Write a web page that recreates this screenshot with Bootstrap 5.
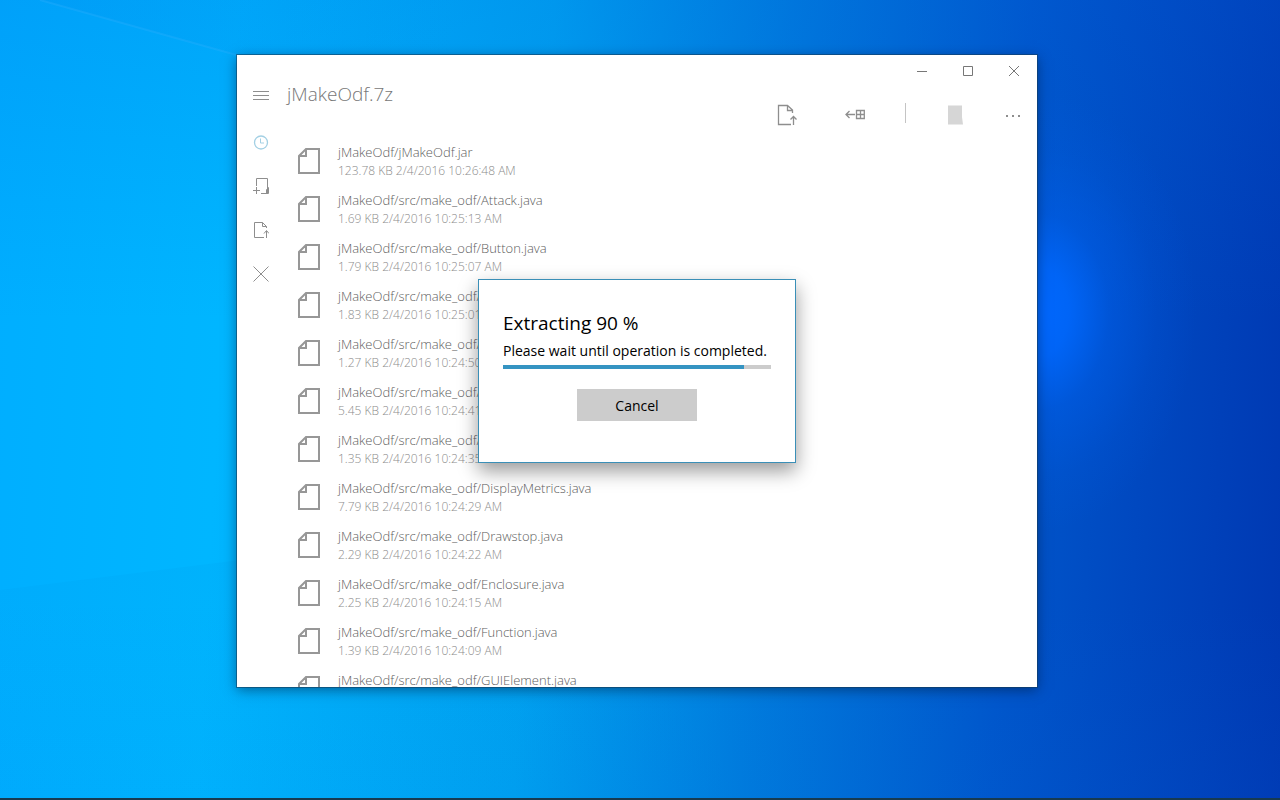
<!DOCTYPE html>
<html lang="en">
<head>
<meta charset="utf-8">
<meta name="viewport" content="width=device-width, initial-scale=1">
<title>jMakeOdf.7z</title>
<link href="https://cdn.jsdelivr.net/npm/bootstrap@5.3.0/dist/css/bootstrap.min.css" rel="stylesheet">
<style>
  body { font-family: "Open Sans", "Noto Sans", sans-serif; color: #000; }
  .desktop {
    background:
      radial-gradient(ellipse 160px 220px at 81% 39%, #0068ff 0%, rgba(0,104,255,.85) 20%, rgba(0,98,245,.4) 45%, rgba(0,96,240,.12) 75%, rgba(0,96,240,0) 100%),
      linear-gradient(180deg, rgba(0,100,225,.18) 0%, rgba(0,100,225,0) 40%, rgba(0,100,225,0) 75%, rgba(0,110,225,.08) 100%),
      linear-gradient(93deg, #00aeff 0%, #00b6ff 18%, #00a2f0 42%, #007adc 60%, #0056cb 78%, #0048c0 88%, #0038b2 100%);
  }
  .taskbar-edge { height: 2px; background: #173a50; z-index: 3; }
  .app-window {
    top: 55px; left: 237px; right: 243px; bottom: 113px;
    min-width: 480px; background: #fff;
    outline: 1px solid rgba(20,60,90,.55);
    box-shadow: 0 3px 12px rgba(0,20,50,.5);
  }
  .flat-btn { border: 0; background: none; padding: 0; color: #8e8e8e; display: flex; align-items: center; justify-content: center; }
  .flat-btn svg { display: block; }
  .caption-bar { height: 26px; }
  .caption-btn { width: 46px; height: 32px; color: #777; }
  .side-rail { width: 48px; }
  .menu-btn { height: 30px; margin-bottom: 9px; }
  .rail-btn { height: 44px; }
  .rail-active { color: #a3d0e4; }
  .head-bar { height: 56px; }
  .archive-name { font-size: 19px; line-height: 26px; font-weight: 300; color: #777; padding-left: 2px; }
  .tool-btn { width: 68px; height: 44px; }
  .more-btn { width: 48px; height: 44px; }
  .tool-rule { width: 1px; height: 20px; margin: 0 15px 4px 16px; background: #c4c4c4; }
  .file-row { height: 48px; padding-left: 13px; gap: 18px; color: #979797; }
  .file-name, .file-meta { white-space: nowrap; font-weight: 300; }
  .file-name { font-size: 13px; line-height: 20px; color: #606060; }
  .file-meta { font-size: 12px; line-height: 18px; color: #8c8c8c; }
  .dialog-box {
    width: 318px; height: 184px; padding: 29px 24px; background: #fff;
    border: 1px solid #3a8fb7; box-shadow: 0 8px 18px rgba(0,0,0,.4);
  }
  .dialog-title { font-size: 19px; line-height: 28px; font-weight: 400; }
  .dialog-text { font-size: 14px; line-height: 20px; white-space: nowrap; }
  .extract-bar { height: 4px; border-radius: 0; background: #ccc; }
  .extract-bar .progress-bar { background: #3594c2; }
  .cancel-btn { width: 120px; height: 32px; margin-top: 20px; border: 0; background: #ccc; font-size: 14px; color: #000; }
</style>
</head>
<body>
<div class="desktop position-relative vh-100 overflow-hidden">
  <svg class="position-absolute w-100 h-100" viewBox="0 0 1280 800" preserveAspectRatio="none" aria-hidden="true">
    <defs>
      <linearGradient id="beam-top" x1="40" y1="0" x2="460" y2="0" gradientUnits="userSpaceOnUse"><stop offset="0" stop-color="#0080e6" stop-opacity=".12"/><stop offset="1" stop-color="#0080e6" stop-opacity="0"/></linearGradient>
      <linearGradient id="beam-low" x1="0" y1="570" x2="0" y2="800" gradientUnits="userSpaceOnUse"><stop offset="0" stop-color="#0090e0" stop-opacity=".1"/><stop offset="1" stop-color="#0090e0" stop-opacity="0"/></linearGradient>
    </defs>
    <path d="M40 0L460 118V0Z" fill="url(#beam-top)"/>
    <path d="M40 0L240 56" stroke="#3cb4ff" stroke-width="2" opacity=".25"/>
    <path d="M0 590L720 500V800H0Z" fill="url(#beam-low)"/>
  </svg>

  <main class="app-window position-absolute d-flex flex-column">
    <header class="caption-bar d-flex justify-content-end flex-shrink-0">
      <button class="flat-btn caption-btn" type="button" aria-label="Minimize"><svg width="12" height="12" fill="none" stroke="currentColor"><path d="M1 6.500H11"/></svg></button>
      <button class="flat-btn caption-btn" type="button" aria-label="Maximize"><svg width="12" height="12" fill="none" stroke="currentColor"><path d="M1.500 1.500H10.500V10.500H1.500Z"/></svg></button>
      <button class="flat-btn caption-btn" type="button" aria-label="Close"><svg width="12" height="12" fill="none" stroke="currentColor"><path d="M1 1L11 11M11 1L1 11"/></svg></button>
    </header>

    <div class="d-flex flex-grow-1 overflow-hidden">
      <nav class="side-rail d-flex flex-column flex-shrink-0" aria-label="Archive">
        <button class="flat-btn menu-btn" type="button" aria-label="Menu"><svg width="16" height="10" fill="none" stroke="currentColor"><path d="M0 .500H16M0 4.500H16M0 8.500H16"/></svg></button>
        <button class="flat-btn rail-btn rail-active" type="button" aria-label="Recent"><svg width="16" height="16" fill="none" stroke="currentColor" stroke-width="1.300"><circle cx="8" cy="8.500" r="6.500"/><path d="M7.500 4.500V9H11" stroke-width="1"/></svg></button>
        <button class="flat-btn rail-btn" type="button" aria-label="New archive"><svg width="16" height="18" fill="none" stroke="currentColor"><path d="M3.500 9V1.500H14.500V16.500H8M0 13.500H7M3.500 10V17M13.500 16V12.500L15.500 10.500V16.500H13"/></svg></button>
        <button class="flat-btn rail-btn" type="button" aria-label="Extract"><svg width="16" height="18" fill="none" stroke="currentColor"><path d="M13.500 7V5.500L9.500 1.500H1.500V16.500H11M9.500 1.500V5.500H13.500M13.500 17V10M11 12.500L13.500 9.500L16 12.500"/></svg></button>
        <button class="flat-btn rail-btn" type="button" aria-label="Close archive"><svg width="16" height="16" fill="none" stroke="currentColor"><path d="M.500 .500L15.500 15.500M15.500 .500L.500 15.500"/></svg></button>
      </nav>

      <section class="d-flex flex-column flex-grow-1">
        <div class="head-bar d-flex flex-shrink-0">
          <h1 class="archive-name m-0 me-auto">jMakeOdf.7z</h1>
          <div class="d-flex align-self-end align-items-center">
            <button class="flat-btn tool-btn" type="button" aria-label="Extract file"><svg width="20" height="22" fill="none" stroke="currentColor" stroke-width="1.300"><path d="M15.500 9V6L10.500 1.500H1.500V20.500H14M10.500 1.500V6.500H15.500M16.500 21V13M13.500 15.500L16.500 12.500L19.500 15.500"/></svg></button>
            <button class="flat-btn tool-btn" type="button" aria-label="Select all"><svg width="20" height="12" fill="none" stroke="currentColor" stroke-width="1.300"><path d="M10 5.500H1M4.500 2L1 5.500L4.500 9M11.500 1.500H19.300V9.500H11.500ZM15.500 1.500V9.500M11.500 5.500H19.500"/></svg></button>
            <span class="tool-rule"></span>
            <button class="flat-btn tool-btn" type="button" aria-label="View"><svg width="16" height="20" fill="#d6d6d6"><path d="M1 .500H15V12L16 19.500H1Z"/></svg></button>
            <button class="flat-btn more-btn" type="button" aria-label="More"><svg width="16" height="4" fill="currentColor"><path d="M1 2H3V4H1ZM7 2H9V4H7ZM13 2H15V4H13Z"/></svg></button>
          </div>
        </div>
        <ul class="list-unstyled m-0" id="files"></ul>
      </section>
    </div>

    <div class="position-absolute top-0 start-0 w-100 h-100 d-flex align-items-center justify-content-center">
      <div class="dialog-box" role="dialog" aria-labelledby="dlg-title" aria-describedby="dlg-text">
        <h2 class="dialog-title m-0 mb-1" id="dlg-title">Extracting 90 %</h2>
        <p class="dialog-text m-0 mb-1" id="dlg-text">Please wait until operation is completed.</p>
        <div class="progress extract-bar" role="progressbar" aria-label="Extracting" aria-valuenow="90" aria-valuemin="0" aria-valuemax="100">
          <div class="progress-bar" style="width: 90%"></div>
        </div>
        <button class="cancel-btn d-block mx-auto" type="button">Cancel</button>
      </div>
    </div>
  </main>
  <div class="taskbar-edge position-absolute bottom-0 w-100"></div>
</div>

<script src="https://cdn.jsdelivr.net/npm/bootstrap@5.3.0/dist/js/bootstrap.bundle.min.js"></script>
<script>
  const files = [
    ["jMakeOdf.jar", "123.78 KB 2/4/2016 10:26:48 AM"],
    ["src/make_odf/Attack.java", "1.69 KB 2/4/2016 10:25:13 AM"],
    ["src/make_odf/Button.java", "1.79 KB 2/4/2016 10:25:07 AM"],
    ["src/make_odf/", "1.83 KB 2/4/2016 10:25:01 AM"],
    ["src/make_odf/", "1.27 KB 2/4/2016 10:24:50 AM"],
    ["src/make_odf/", "5.45 KB 2/4/2016 10:24:41 AM"],
    ["src/make_odf/", "1.35 KB 2/4/2016 10:24:35 AM"],
    ["src/make_odf/DisplayMetrics.java", "7.79 KB 2/4/2016 10:24:29 AM"],
    ["src/make_odf/Drawstop.java", "2.29 KB 2/4/2016 10:24:22 AM"],
    ["src/make_odf/Enclosure.java", "2.25 KB 2/4/2016 10:24:15 AM"],
    ["src/make_odf/Function.java", "1.39 KB 2/4/2016 10:24:09 AM"],
    ["src/make_odf/GUIElement.java", ""]
  ];
  document.getElementById("files").innerHTML = files.map(([name, meta]) => `
    <li class="file-row d-flex align-items-center">
      <svg class="flex-shrink-0" width="22" height="26" fill="none" stroke="currentColor" stroke-width="2" aria-hidden="true"><path d="M8 1H21V25H1V8ZM8 1V8H1"/></svg>
      <div>
        <div class="file-name">jMakeOdf/${name}</div>
        <div class="file-meta">${meta || "&nbsp;"}</div>
      </div>
    </li>`).join("");
</script>
</body>
</html>
